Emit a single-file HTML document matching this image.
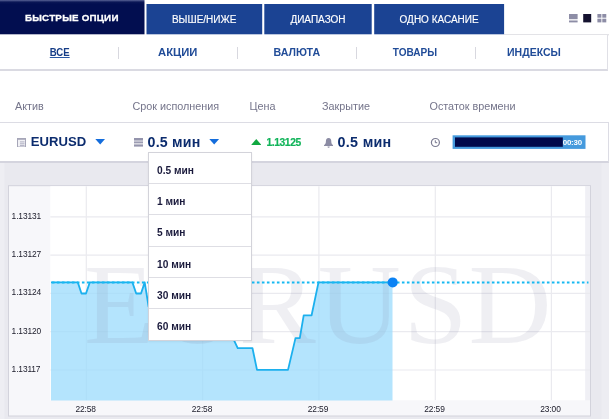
<!DOCTYPE html>
<html lang="ru">
<head>
<meta charset="utf-8">
<title>Быстрые опции</title>
<style>
*{box-sizing:border-box;margin:0;padding:0}
html,body{width:609px;height:419px;overflow:hidden;background:#fff}
body{position:relative;will-change:transform;font-family:"Liberation Sans",sans-serif;color:#0b2a6b}
.abs{position:absolute}
.tab{position:absolute;color:#fff;font-size:10px;text-align:center;white-space:nowrap;letter-spacing:0}
.tab span{position:absolute;left:0;right:0;top:0;display:block}
#t1{left:0;top:0;width:144.3px;height:34px;font-weight:bold}
#t1 span{line-height:36.4px;font-size:9.8px;left:-0.6px;letter-spacing:.22px;-webkit-text-stroke:.3px #fff}
#t2{left:146.2px;top:4px;width:116px;height:30px}
#t3{left:264.3px;top:4px;width:107.4px;height:30px}
#t4{left:374.2px;top:4px;width:129.9px;height:30px}
#t2 span,#t3 span,#t4 span{line-height:31px;font-size:10px;-webkit-text-stroke:.15px #fff}
.vi{position:absolute;top:14.4px;height:8.4px}
#subnav{position:absolute;left:-2px;top:35px;width:610.3px;height:36.2px;background:#fff;border:1px solid #e0e0e6;border-top:0;border-bottom:2px solid #dadae2}
.cat{position:absolute;top:0px;width:118.8px;height:34px;line-height:35px;text-align:center;font-weight:bold;font-size:11.3px;color:#214c98;white-space:nowrap}
.cat.on{color:#153c86}.cat.on b{text-decoration:underline;text-underline-offset:.5px;text-decoration-thickness:1.3px;text-decoration-color:#2a58a4;position:relative;left:.5px}
.cat b{display:inline-block;font-weight:bold;transform-origin:50% 50%}
.sep{position:absolute;top:46.5px;width:1px;height:12px;background:#d8d8df}
.lbl{position:absolute;top:99px;line-height:14px;font-size:10.8px;color:#74748a;white-space:nowrap}
#row{position:absolute;left:-2px;top:122px;width:610.5px;height:40.5px;background:#fff;border:1.5px solid #dcdce4;border-bottom:2px solid #d4d4de}
.val{position:absolute;top:132.3px;line-height:20px;font-weight:bold;white-space:nowrap;color:#0c2c6e}
#chartwrap{position:absolute;left:0;top:162.5px;width:609px;height:257px;background:#e9e9ef}
#dd{position:absolute;left:147.7px;top:151.5px;width:104px;height:189.2px;overflow:hidden;background:#fff;border:1px solid #d3d3da;box-shadow:0 1px 2px rgba(0,0,0,.06)}
#dd div{height:31.35px;line-height:36.2px;padding-left:8.3px;font-size:10.2px;font-weight:bold;color:#1a1a3c;border-bottom:1px solid #dedee4;white-space:nowrap}
#dd div:last-child{border-bottom:0}
</style>
</head>
<body>
<svg class="abs" style="left:0;top:0;width:609px;height:36px" viewBox="0 0 609 36">
  <defs><linearGradient id="g1" x1="0" y1="0" x2="0" y2="1"><stop offset="0" stop-color="#5a6396"/><stop offset=".06" stop-color="#0a1656"/><stop offset=".12" stop-color="#020e50"/><stop offset="1" stop-color="#020e50"/></linearGradient></defs>
  <rect x="504" y="34.2" width="105" height="1.1" fill="#dcdce2"/>
  <rect x="0" y="0" width="144.5" height="34.3" fill="url(#g1)"/>
  <rect x="146.5" y="4" width="115.7" height="30.3" fill="#1b4393"/>
  <rect x="264.3" y="4" width="107.4" height="30.3" fill="#1b4393"/>
  <rect x="374.2" y="4" width="129.9" height="30.3" fill="#1b4393"/>
</svg>
<div id="t1" class="tab"><span>БЫСТРЫЕ ОПЦИИ</span></div>
<div id="t2" class="tab"><span>ВЫШЕ/НИЖЕ</span></div>
<div id="t3" class="tab"><span>ДИАПАЗОН</span></div>
<div id="t4" class="tab"><span>ОДНО КАСАНИЕ</span></div>

<svg class="vi" style="left:568.8px;width:38px" viewBox="0 0 38 8.4">
  <rect x="0" y="0" width="8.6" height="5.2" fill="#8d8da6"/><rect x="0" y="6.5" width="8.6" height="1.9" fill="#8d8da6"/>
  <rect x="14.2" y="0" width="8" height="8.4" fill="#14122f"/>
  <rect x="28.4" y="0" width="4" height="3.7" fill="#8d8da6"/><rect x="33.3" y="0" width="4" height="3.7" fill="#8d8da6"/>
  <rect x="28.4" y="4.7" width="4" height="3.7" fill="#8d8da6"/><rect x="33.3" y="4.7" width="4" height="3.7" fill="#8d8da6"/>
</svg>

<div id="subnav">
  <div class="cat on" style="left:0.5px"><b style="transform:scaleX(0.85)">ВСЕ</b></div>
  <div class="cat" style="left:119.3px"><b style="transform:scaleX(0.995)">АКЦИИ</b></div>
  <div class="cat" style="left:238.1px"><b style="transform:scaleX(0.94)">ВАЛЮТА</b></div>
  <div class="cat" style="left:356.9px"><b style="transform:scaleX(0.89)">ТОВАРЫ</b></div>
  <div class="cat" style="left:475.7px"><b style="transform:scaleX(0.93)">ИНДЕКСЫ</b></div>
</div>
<div class="sep" style="left:118px"></div>
<div class="sep" style="left:237px"></div>
<div class="sep" style="left:356px"></div>
<div class="sep" style="left:475px"></div>

<div class="lbl" style="left:15px">Актив</div>
<div class="lbl" style="left:132.5px">Срок исполнения</div>
<div class="lbl" style="left:249.5px">Цена</div>
<div class="lbl" style="left:322px">Закрытие</div>
<div class="lbl" style="left:429.5px">Остаток времени</div>

<div id="row"></div>

<!-- asset -->
<svg class="abs" style="left:17px;top:137.5px;width:9px;height:9.5px" viewBox="0 0 9 9.5">
  <rect x="0.5" y="0.5" width="8" height="8.5" fill="#f1f1f5" stroke="#a6a6b8" stroke-width="1"/>
  <rect x="0" y="0" width="9" height="1.8" fill="#a6a6b8"/>
  <rect x="3" y="3.4" width="4.5" height="1" fill="#b0b0c2"/>
  <rect x="3" y="5.3" width="4.5" height="1" fill="#b0b0c2"/>
  <rect x="3" y="7.1" width="4.5" height="1" fill="#b0b0c2"/>
</svg>
<div class="val" id="v1" style="left:30.8px;font-size:13.1px">EURUSD</div>
<svg class="abs" style="left:94.7px;top:139px;width:10.4px;height:5.6px" viewBox="0 0 10.5 6"><path d="M0 0H10.5L5.25 6Z" fill="#146ddc"/></svg>

<!-- expiry -->
<svg class="abs" style="left:133.5px;top:138.4px;width:9.6px;height:8.6px" viewBox="0 0 9.6 8.6">
  <rect x="0" y="0" width="9.6" height="2.6" fill="#9494ac"/>
  <rect x="0" y="3.4" width="9.6" height="2" fill="#9c9cb2"/>
  <rect x="0" y="6.4" width="9.6" height="2.2" fill="#9494ac"/>
</svg>
<div class="val" id="v2" style="left:147.6px;font-size:14.2px;letter-spacing:.2px">0.5 мин</div>
<svg class="abs" style="left:209.2px;top:139px;width:10.4px;height:5.6px" viewBox="0 0 10.5 6"><path d="M0 0H10.5L5.25 6Z" fill="#146ddc"/></svg>

<!-- price -->
<svg class="abs" style="left:250.6px;top:139px;width:10.5px;height:6.2px" viewBox="0 0 10.5 6.2"><path d="M0 6.2H10.5L5.25 0Z" fill="#10a840"/></svg>
<div class="val" id="v3" style="left:266.5px;top:133.3px;font-size:10.3px;letter-spacing:-0.42px;color:#12b45a;-webkit-text-stroke:.2px #12b45a">1.13125</div>

<!-- closing -->
<svg class="abs" style="left:323.8px;top:138px;width:9.2px;height:9.8px" viewBox="0 0 9.2 9.8">
  <path d="M4.6 0C2.6 0 1.9 1.6 1.9 3.4C1.9 5.4 1.2 6.3 0 7.2V8H9.2V7.2C8 6.3 7.3 5.4 7.3 3.4C7.3 1.6 6.6 0 4.6 0Z" fill="#8c8ca4"/>
  <path d="M3.5 8.5H5.7A1.1 1.2 0 0 1 3.5 8.5Z" fill="#8c8ca4"/>
</svg>
<div class="val" id="v4" style="left:337.6px;font-size:14.3px;letter-spacing:.3px">0.5 мин</div>

<!-- remaining -->
<svg class="abs" style="left:430px;top:137px;width:11px;height:11px" viewBox="0 0 11 11">
  <circle cx="5.4" cy="5.5" r="4" fill="none" stroke="#7c7c92" stroke-width="1.2"/>
  <path d="M5.3 3.3V5.7H7.2" fill="none" stroke="#74748c" stroke-width="1"/>
</svg>
<svg class="abs" style="left:450px;top:133px;width:140px;height:18px" viewBox="450 133 140 18"><rect x="452.6" y="135.3" width="132.9" height="13.6" fill="#459add"/><rect x="455" y="137.4" width="107.8" height="9.4" fill="#01094b"/></svg>
<div class="abs" id="tm" style="left:562.3px;top:137.5px;width:20px;line-height:10px;font-size:7.9px;font-weight:bold;color:#fff;text-align:center;letter-spacing:-0.2px">00:30</div>

<div id="chartwrap">
<svg width="609" height="257" viewBox="0 162.5 609 257" style="position:absolute;left:0;top:0;font-family:'Liberation Sans',sans-serif">
  <rect x="0" y="162.5" width="4.5" height="257" fill="#eeeef3"/>
  <rect x="601.5" y="162.5" width="7.5" height="257" fill="#ededf2"/>
  <!-- chart box -->
  <rect x="8" y="184.7" width="583" height="231.3" fill="#d3d3dc"/>
  <rect x="9" y="185.7" width="581" height="229.3" fill="#f7f7fa"/>
  <rect x="50.3" y="185.7" width="535" height="214.1" fill="#fff"/>
  <rect x="585.3" y="185.7" width="4.7" height="214.1" fill="#f0f0f5"/>
  <!-- grid -->
  <g stroke="#eaeaef" stroke-width="1.2">
    <path d="M50.3 216.4H590M50.3 254.6H590M50.3 292.9H590M50.3 331.1H590M50.3 369.5H590"/>
    <path d="M86.3 185.7V399.8M202.7 185.7V399.8M318.9 185.7V399.8M435.3 185.7V399.8M551.4 185.7V399.8"/>
  </g>
  <!-- area -->
  <path id="area" d="M51 281.9 L77.8 281.9 L81.5 293 L86 293 L89.8 281.9 L132.4 281.9 L136.2 293 L141 293 L144.7 281.9 L148.6 306 L156 306 L160 326 L166 326 L169 337.6 L233 337.6 L237.7 347.7 L252.5 347.7 L257 369.4 L288 369.4 L295.5 337.6 L299.8 337.6 L303.7 314.8 L311.6 314.8 L318.5 281.9 L392.5 281.9 L392.5 399.9 L51 399.9 Z" fill="#9bdbfc" fill-opacity=".75"/>
  <!-- watermark -->
  <text x="84.1 156 239 317.7 403.5 468.5" y="342.2" font-family="'Liberation Serif',serif" font-size="115" fill="#8686a2" fill-opacity=".13">EURUSD</text>
  <!-- series -->
  <path d="M51 281.9 L77.8 281.9 L81.5 293 L86 293 L89.8 281.9 L132.4 281.9 L136.2 293 L141 293 L144.7 281.9 L148.6 306 L156 306 L160 326 L166 326 L169 337.6 L233 337.6 L237.7 347.7 L252.5 347.7 L257 369.4 L288 369.4 L295.5 337.6 L299.8 337.6 L303.7 314.8 L311.6 314.8 L318.5 281.9 L392.5 281.9" fill="none" stroke="#1cb0ee" stroke-width="1.8" stroke-linejoin="round"/>
  <path d="M51.9 281.9H588.5" stroke="#17b9f2" stroke-width="2" stroke-dasharray="2.6 2.4" fill="none"/>
  <circle cx="392.7" cy="281.9" r="5" fill="#0b82f4"/>
  <!-- labels -->
  <g font-size="8.4" fill="#20202e" letter-spacing="-0.12">
    <text x="11.6" y="218">1.13131</text>
    <text x="11.6" y="256.3">1.13127</text>
    <text x="11.6" y="294.7">1.13124</text>
    <text x="11.6" y="333">1.13120</text>
    <text x="11.6" y="371.4">1.13117</text>
    <g text-anchor="middle">
      <text x="85.7" y="411">22:58</text>
      <text x="202" y="411">22:58</text>
      <text x="318" y="411">22:59</text>
      <text x="434.5" y="411">22:59</text>
      <text x="550.5" y="411">23:00</text>
    </g>
  </g>
</svg>
</div>

<div id="dd">
  <div>0.5 мин</div>
  <div>1 мин</div>
  <div>5 мин</div>
  <div>10 мин</div>
  <div>30 мин</div>
  <div>60 мин</div>
</div>
</body>
</html>
